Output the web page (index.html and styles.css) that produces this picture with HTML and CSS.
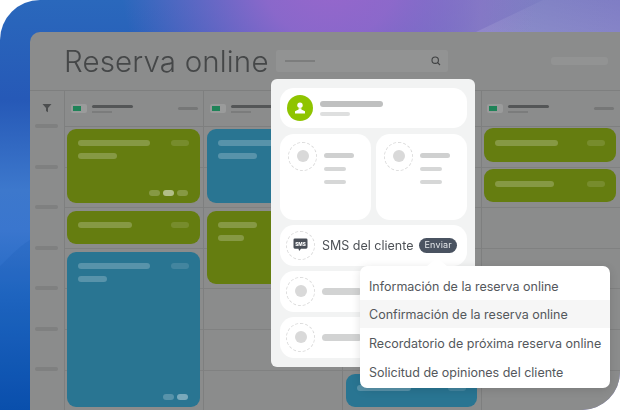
FILE: index.html
```html
<!DOCTYPE html>
<html lang="es">
<head>
<meta charset="utf-8">
<title>Reserva online</title>
<link rel="stylesheet" href="styles.css">
</head>
<body>
<div class="stage">
  <svg class="streaks" width="620" height="410" viewBox="0 0 620 410" aria-hidden="true">
    <defs>
      <linearGradient id="s1" x1="0" y1="1" x2="1" y2="0"><stop offset="0" stop-color="#fff" stop-opacity=".11"/><stop offset="1" stop-color="#fff" stop-opacity=".01"/></linearGradient>
    </defs>
    <polygon points="476,32 543,0 620,0 620,32" fill="url(#s1)"/>
    <path d="M0 266C10 256 20 246 30 240V410H0z" fill="#0a4aa8" fill-opacity=".12"/>
  </svg>
  <main class="app">
    <header class="topbar">
      <h1 class="title">Reserva online</h1>
      <div class="search">
        <span class="search-dash"></span>
        <svg width="10" height="10" viewBox="0 0 10 10" fill="none" stroke="#3f4142" stroke-width="1.1"><circle cx="4.2" cy="4.2" r="3.2"/><path d="M6.6 6.6 9 9"/></svg>
      </div>
      <span class="top-pill"></span>
    </header>
    <section class="calendar">
      <div class="time-col">
        <div class="filter-cell">
          <svg width="10" height="10" viewBox="0 0 10 10" fill="#4c4e4f"><path d="M.5 1h9L6 5v4.2L4 8V5z"/></svg>
        </div>
        <div class="ticks"><i></i><i></i><i></i><i></i><i></i><i></i><i></i></div>
      </div>
      <div class="col first">
        <div class="col-head"><span class="battery"><b></b></span><span class="who"><i></i><i></i></span><span class="tag"></span></div>
        <div class="col-body">
          <div class="card green h74"><div class="line"><i class="w72"></i><i class="w18"></i></div><div class="line"><i class="w39"></i></div><div class="dots"><i></i><i class="on"></i><i></i></div></div>
          <div class="card green h33 gap8"><div class="line"><i class="w54"></i><i class="w18"></i></div></div>
          <div class="card blue h155 gap8"><div class="line"><i class="w72"></i><i class="w18"></i></div><div class="line"><i class="w29"></i></div><div class="dots"><i></i><i class="on2"></i></div></div>
        </div>
      </div>
      <div class="col">
        <div class="col-head"><span class="battery"><b></b></span><span class="who"><i></i><i></i></span><span class="tag"></span></div>
        <div class="col-body">
          <div class="card blue h74"><div class="line"><i class="w72"></i></div><div class="line"><i class="w39"></i></div></div>
          <div class="card green h73 gap8"><div class="line"><i class="w39"></i></div><div class="line"><i class="w26"></i></div></div>
        </div>
      </div>
      <div class="col">
        <div class="col-head"></div>
        <div class="col-body end">
          <div class="card blue h33"><div class="line"><i class="w54"></i><i class="w18"></i></div></div>
        </div>
      </div>
      <div class="col last">
        <div class="col-head"><span class="battery"><b></b></span><span class="who"><i></i><i></i></span><span class="tag"></span></div>
        <div class="col-body">
          <div class="card green h34 short"><div class="line"><i class="w63"></i><i class="w18"></i></div></div>
          <div class="card green h33 short gap7"><div class="line"><i class="w59"></i><i class="w18"></i></div></div>
        </div>
      </div>
    </section>
  </main>

  <aside class="popup">
    <div class="tile profile">
      <span class="avatar"><svg width="14" height="14" viewBox="0 0 14 14" fill="#fff"><circle cx="7" cy="4.3" r="2.7"/><path d="M5.6 7.3h2.8v1.2L12 10.2V12.4H2V10.2l3.6-1.7z"/></svg></span>
      <span class="profile-text"><i class="bar-a"></i><i class="bar-b"></i></span>
    </div>
    <div class="pair">
      <div class="tile split"><span class="ring"><b></b></span><span class="split-text"><i class="bar-c"></i><i class="bar-d"></i><i class="bar-d"></i></span></div>
      <div class="tile split"><span class="ring"><b></b></span><span class="split-text"><i class="bar-c"></i><i class="bar-d"></i><i class="bar-d"></i></span></div>
    </div>
    <div class="tile row">
      <span class="ring">
        <svg width="15" height="14" viewBox="0 0 16 15"><path d="M2 .5h12a1.5 1.5 0 0 1 1.5 1.5v8a1.5 1.5 0 0 1-1.5 1.5H8.6L6.5 14l-.6-2.5H2A1.5 1.5 0 0 1 .5 10V2A1.5 1.5 0 0 1 2 .5z" fill="#4a4f58"/><text x="8" y="8.2" text-anchor="middle" class="sms-glyph">SMS</text></svg>
      </span>
      <span class="row-label">SMS del cliente</span>
      <span class="send">Enviar</span>
    </div>
    <div class="tile row"><span class="ring"><b></b></span><i class="bar-e"></i></div>
    <div class="tile row"><span class="ring"><b></b></span><i class="bar-e"></i></div>
  </aside>

  <nav class="menu">
    <span class="menu-arrow"></span>
    <a class="menu-item">Información de la reserva online</a>
    <a class="menu-item active">Confirmación de la reserva online</a>
    <a class="menu-item tall">Recordatorio de próxima reserva online</a>
    <a class="menu-item">Solicitud de opiniones del cliente</a>
  </nav>
</div>
</body>
</html>
```

FILE: styles.css
```css
* { box-sizing: border-box; }
html, body { margin: 0; padding: 0; background: #fff; }
body { width: 620px; height: 410px; overflow: hidden; font-family: Inter, "Open Sans", sans-serif; }
i { display: block; font-style: normal; }

.stage {
  position: relative;
  width: 620px;
  height: 410px;
  overflow: hidden;
  padding: 32px 0 0 30px;
  border-top-left-radius: 40px;
  border-bottom-right-radius: 38px;
  background:
    radial-gradient(circle at 330px -30px, #9a66cc 0, rgba(148,104,204,.9) 70px, rgba(140,110,200,0) 210px),
    linear-gradient(90deg, rgba(47,110,192,0) 0, rgba(47,110,192,0) 350px, #7c80c2 480px, #7e7cc4 620px),
    linear-gradient(180deg, #2a68bc 0, #2659b7 100px, #3d78cc 190px, #3a76ce 230px, #2067c2 300px, #0a50ae 410px);
}
.streaks { position: absolute; left: 0; top: 0; }

.app {
  position: relative;
  width: 590px;
  height: 378px;
  overflow: hidden;
  background: #8b8c8c;
  border-top-left-radius: 10px;
  filter: blur(.4px);
}
.topbar {
  display: flex;
  align-items: center;
  height: 58px;
  padding: 0 12px 0 34px;
}
.title {
  margin: 0;
  font-size: 29.5px;
  font-weight: 300;
  letter-spacing: .15px;
  color: #454748;
  white-space: nowrap;
  width: 212px;
}
.search {
  display: flex;
  align-items: center;
  justify-content: space-between;
  width: 172px;
  height: 22px;
  padding: 0 7px 0 9px;
  background: #929393;
  border-radius: 2px;
}
.search-dash { width: 30px; height: 2px; background: #7c7d7d; }
.top-pill { width: 57px; height: 8px; margin-left: auto; border-radius: 3px; background: #929393; }

.calendar {
  display: grid;
  grid-template-columns: 35px 139px 139px 139px 139px;
  height: 320px;
  border-top: 1px solid #7e7f7f;
}
.filter-cell {
  display: flex;
  align-items: center;
  justify-content: center;
  height: 33px;
}
.ticks {
  display: flex;
  flex-direction: column;
  gap: 36.5px;
  padding-left: 5px;
}
.ticks i { width: 23px; height: 4px; border-radius: 2px; background: #7f8080; }
.time-col { border-right: 1px solid #7e7f7f; }

.col { border-right: 1px solid #7e7f7f; display: flex; flex-direction: column; }
.col.last { border-right: 0; }
.col-head {
  display: flex;
  align-items: center;
  height: 35px;
  padding: 0 5px 0 6px;
  flex: none;
}
.col.last .col-head { padding: 0 7px 0 5px; }
.battery {
  display: flex;
  align-items: center;
  width: 16px;
  height: 9px;
  padding: 0 2px;
  margin-right: 5px;
  border-radius: 2px;
  background: #9a9b9b;
}
.battery b { width: 8px; height: 5px; background: #1f8358; }
.who { display: flex; flex-direction: column; gap: 3px; padding-top: 1px; }
.who i:first-child { width: 41px; height: 3px; border-radius: 2px; background: #545657; }
.who i:last-child { width: 20px; height: 2px; background: #7b7c7c; }
.tag { width: 20px; height: 3px; margin-left: auto; border-radius: 2px; background: #767777; }

.col-body {
  flex: 1;
  display: flex;
  flex-direction: column;
  padding: 2px 3px 0 3px;
  border-top: 1px solid #7e7f7f;
  background: repeating-linear-gradient(180deg, transparent 0, transparent 39.6px, #808181 39.6px, #808181 40.6px);
}
.col.first .col-body { padding-left: 2px; }
.col.last .col-body { padding: 1px 5px 0 2px; }
.col-body.end { justify-content: flex-end; padding: 0 4px 3px 3px; }

.card { position: relative; border-radius: 9px; padding: 11px 11px 0; flex: none; }
.card.short { padding-top: 12px; }
.green { background: #657d10; }
.blue { background: #297592; }
.h74 { height: 74px; }
.h73 { height: 73px; }
.h33 { height: 33px; }
.h34 { height: 34px; }
.h155 { height: 155px; }
.gap8 { margin-top: 8px; }
.gap7 { margin-top: 7px; }

.line { display: flex; justify-content: space-between; margin-bottom: 7px; }
.line i { height: 6px; border-radius: 3px; background: rgba(255,255,255,.22); }
.line .w18 { background: rgba(255,255,255,.12); }
.w72 { width: 72px; }
.w63 { width: 63px; }
.w59 { width: 59px; }
.w54 { width: 54px; }
.w39 { width: 39px; }
.w29 { width: 29px; }
.w26 { width: 26px; }
.w18 { width: 18px; }
.dots { position: absolute; right: 12px; bottom: 7px; display: flex; gap: 3px; }
.dots i { width: 11px; height: 6px; border-radius: 3px; background: rgba(255,255,255,.22); }
.dots .on { background: rgba(255,255,255,.5); }
.dots .on2 { background: rgba(255,255,255,.38); }

.popup {
  position: absolute;
  left: 271px;
  top: 79px;
  width: 204px;
  height: 288px;
  padding: 9px 8px 9px 9px;
  display: flex;
  flex-direction: column;
  gap: 5.5px;
  border-radius: 6px;
  background: #f2f3f3;
  filter: blur(.3px);
}
.tile { background: #fff; border-radius: 14px; }
.profile { display: flex; align-items: center; height: 40px; padding-left: 7px; gap: 7px; flex: none; }
.avatar { display: flex; align-items: center; justify-content: center; width: 26px; height: 26px; border-radius: 50%; background: #8fc400; }
.profile-text { display: flex; flex-direction: column; gap: 5px; }
.bar-a { width: 63px; height: 6px; border-radius: 3px; background: #bfc0c0; }
.bar-b { width: 30px; height: 4px; border-radius: 2px; background: #dedfdf; }
.pair { display: flex; gap: 5px; height: 86px; flex: none; }
.split { flex: 1; display: flex; padding: 8px 0 0 8px; gap: 7px; }
.ring {
  display: flex;
  align-items: center;
  justify-content: center;
  width: 29px;
  height: 29px;
  flex: none;
  border-radius: 50%;
  border: 1px dashed #dcdcdc;
}
.ring b { width: 12px; height: 12px; border-radius: 50%; background: #d9d9d9; }
.split-text { display: flex; flex-direction: column; gap: 9px; padding-top: 11px; }
.bar-c { width: 30px; height: 5px; border-radius: 3px; background: #cfd0d0; }
.bar-d { width: 22px; height: 4px; border-radius: 2px; background: #d6d7d7; }
.row { display: flex; align-items: center; height: 40.5px; padding-left: 6px; flex: none; }
.row .ring { margin-right: 7px; }
.row-label { font-size: 12.5px; color: #4d5156; white-space: nowrap; }
.bar-e { width: 40px; height: 7px; border-radius: 4px; background: #d2d3d3; }
.sms-glyph { font-family: Inter, sans-serif; font-size: 5px; font-weight: 800; fill: #fff; }
.send {
  margin-left: 6px;
  padding: 0 5px;
  height: 15px;
  line-height: 14px;
  font-size: 9px;
  letter-spacing: .2px;
  border-radius: 8px;
  background: #4a5361;
  color: #e4e7ea;
}

.menu {
  position: absolute;
  left: 360px;
  top: 266px;
  width: 250px;
  height: 122px;
  padding: 6px 0 2px;
  display: flex;
  flex-direction: column;
  background: #fff;
  border-radius: 7px;
  box-shadow: 0 2px 10px rgba(0,0,0,.12);
}
.menu-arrow {
  position: absolute;
  left: 67px;
  top: -8px;
  width: 0;
  height: 0;
  border-left: 10px solid transparent;
  border-right: 10px solid transparent;
  border-bottom: 8px solid #fff;
}
.menu-item {
  display: flex;
  align-items: center;
  flex: none;
  height: 28px;
  padding-left: 9px;
  font-size: 12.5px;
  color: #54585c;
  white-space: nowrap;
}
.menu-item.tall { height: 30px; }
.menu-item.active { background: #f6f6f6; }
```
